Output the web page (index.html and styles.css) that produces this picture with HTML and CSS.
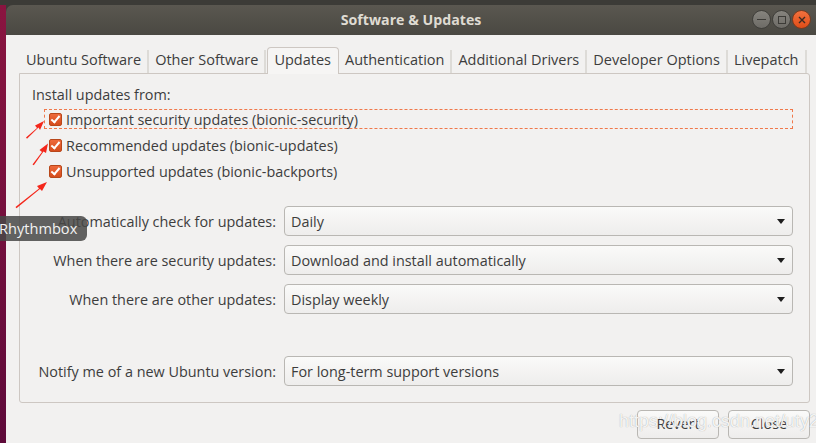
FILE: index.html
```html
<!DOCTYPE html>
<html lang="en">
    <head>
        <title>Software &amp; Updates</title>
        <link rel="stylesheet" href="styles.css">
    </head>
    <body>
        <div class="topbar"></div>
        <div class="desk">
            <div class="wallpaper"></div>
            <div class="window">
                <div class="titlebar">
                    <div class="title">Software &amp; Updates</div>
                    <div class="wm-buttons">
                        <div class="wm-btn wm-min"><span></span></div>
                        <div class="wm-btn wm-max"><span></span></div>
                        <div class="wm-btn wm-close">
                            <svg width="8" height="8" viewBox="0 0 8 8"><path d="M1 1L7 7M7 1L1 7" stroke="#3c2a22" stroke-width="1.4"/></svg>
                        </div>
                    </div>
                </div>
                <div class="content">
                    <div class="tabs">
                        <div class="tab">Ubuntu Software</div>
                        <div class="tab">Other Software</div>
                        <div class="tab active">Updates</div>
                        <div class="tab">Authentication</div>
                        <div class="tab">Additional Drivers</div>
                        <div class="tab">Developer Options</div>
                        <div class="tab">Livepatch</div>
                    </div>
                    <div class="panel">
                        <div class="heading">Install updates from:</div>
                        <div class="check-row focused"><span class="check"></span>Important security updates (bionic-security)</div>
                        <div class="check-row"><span class="check"></span>Recommended updates (bionic-updates)</div>
                        <div class="check-row"><span class="check"></span>Unsupported updates (bionic-backports)</div>

                        <div class="options">
                            <div class="label">Automatically check for updates:</div>
                            <div class="combo">Daily<span class="arrow"></span></div>
                            <div class="label">When there are security updates:</div>
                            <div class="combo">Download and install automatically<span class="arrow"></span></div>
                            <div class="label">When there are other updates:</div>
                            <div class="combo">Display weekly<span class="arrow"></span></div>
                            <div class="label spaced">Notify me of a new Ubuntu version:</div>
                            <div class="combo spaced">For long-term support versions<span class="arrow"></span></div>
                        </div>
                    </div>
                    <div class="actions">
                        <div class="button">Revert</div>
                        <div class="button">Close</div>
                    </div>
                </div>
            </div>
        </div>

        <!-- screenshot annotations and overlays -->
        <svg class="arrows" width="60" height="220" viewBox="0 0 60 220">
            <polygon points="26,137.5 37,128 35,125.5 44,121 40,130 38.5,127.5 27,138.8" fill="#f4271b"/>
            <polygon points="32.5,164.5 42,152 39.5,150 48,143.5 46,153 43.5,151.5 33.8,165.2" fill="#f4271b"/>
            <polygon points="15.5,207 39,188.5 37,186 47,182 42,191 40,189 16.5,208.2" fill="#f4271b"/>
        </svg>
        <div class="tooltip">Rhythmbox</div>
        <div class="watermark">https://blog.csdn.net/uty2</div>
    </body>
</html>
```

FILE: styles.css
```css
*{
    margin: 0px;
    padding: 0px;
    box-sizing: border-box;
}
body{
    width: 816px;
    height: 443px;
    overflow: hidden;
    background-color: #3c3b37;
    font-family: "Open Sans", "Noto Sans", sans-serif;
    font-size: 14px;
    color: #3d3d3d;
    position: relative;
}
.topbar{
    height: 5px;
    background-color: #3c3b37;
}
.desk{
    display: flex;
    height: 438px;
}
.wallpaper{
    width: 6px;
    background: linear-gradient(#8a1540, #5e0a3a);
}
.window{
    flex: 1;
    display: flex;
    flex-direction: column;
}
.titlebar{
    height: 30px;
    background: linear-gradient(#5a5750, #4a4842);
    border-radius: 7px 0 0 0;
    display: flex;
    align-items: center;
    justify-content: center;
    position: relative;
}
.title{
    color: #dfdbd2;
    font-weight: bold;
    font-size: 14.2px;
    padding-bottom: 1px;
}
.wm-buttons{
    position: absolute;
    right: 5px;
    top: 5px;
    display: flex;
}
.wm-btn{
    width: 19px;
    height: 19px;
    border-radius: 50%;
    background: linear-gradient(#86847e, #6d6b66);
    border: 1px solid #3f3e3a;
    display: flex;
    align-items: center;
    justify-content: center;
    margin-left: 1px;
}
.wm-min span{
    width: 9px;
    height: 1px;
    background-color: #3c3b37;
}
.wm-max span{
    width: 8px;
    height: 8px;
    border: 1px solid #3c3b37;
}
.wm-close{
    background: linear-gradient(#f2713e, #df4d18);
    border-color: #7a3a1e;
}
.content{
    flex: 1;
    background-color: #f2f1f0;
    padding: 12px 0px 0px 13px;
    display: flex;
    flex-direction: column;
}
.tabs{
    display: flex;
    margin-left: 1px;
    height: 26px;
    align-items: stretch;
}
.tab{
    padding: 2px 8px 0px 6px;
    line-height: 22px;
    color: #3d3d3d;
    font-size: 14.5px;
    position: relative;
}
.tab:after{
    content: "";
    position: absolute;
    right: 0px;
    top: 3px;
    bottom: 0px;
    width: 2px;
    background-color: #dddbd7;
}
.tab.active{
    background-color: #f6f5f4;
    border: 1px solid #cdc7c2;
    border-bottom: none;
    border-radius: 4px 4px 0 0;
    margin-left: 1px;
    padding: 1px 7px 0 6px;
    height: 27px;
    z-index: 2;
}
.tab.active:after{
    display: none;
}
.panel{
    height: 330px;
    margin-right: 6px;
    border: 1px solid #cdc7c2;
    border-radius: 0 3px 3px 3px;
    padding: 11px 16px 0px 12px;
}
.heading{
    line-height: 20px;
    font-size: 14.4px;
}
.check-row{
    display: flex;
    align-items: center;
    height: 20px;
    margin: 3px 0px 6px 12px;
    padding-left: 4px;
    border: 1px dashed transparent;
    font-size: 14.4px;
}
.check-row.focused{
    border-color: #f0784a;
    margin-top: 4px;
}
.check{
    width: 13px;
    height: 13px;
    border-radius: 2px;
    border: 1px solid #b8471a;
    background: linear-gradient(#ee6a3c, #d54c1c);
    margin-right: 4px;
    position: relative;
}
.check:after{
    content: "";
    position: absolute;
    left: 3px;
    top: 0px;
    width: 3px;
    height: 7px;
    border: solid white;
    border-width: 0 2px 2px 0;
    transform: rotate(40deg);
}
.options{
    display: grid;
    grid-template-columns: 244px 1fr;
    column-gap: 8px;
    row-gap: 9px;
    margin-top: 25px;
    align-items: center;
}
.label{
    text-align: right;
    font-size: 14.4px;
}
.label.spaced,
.combo.spaced{
    margin-top: 33px;
}
.combo{
    height: 30px;
    border: 1px solid #b9b7b3;
    border-radius: 4px;
    background: linear-gradient(#fafaf9, #eeedec);
    display: flex;
    align-items: center;
    padding: 0px 7px 0px 6px;
    font-size: 14.4px;
}
.arrow{
    margin-left: auto;
    width: 0px;
    height: 0px;
    border-left: 4px solid transparent;
    border-right: 4px solid transparent;
    border-top: 5px solid #1e1e1e;
}
.actions{
    display: flex;
    justify-content: flex-end;
    gap: 9px;
    margin-top: 7px;
    padding-right: 6px;
}
.button{
    width: 82px;
    height: 29px;
    border: 1px solid #b9b7b3;
    border-radius: 4px;
    background: linear-gradient(#fafaf9, #eeedec);
    text-align: center;
    line-height: 26px;
    font-size: 14.4px;
}
.arrows{
    position: absolute;
    left: 0px;
    top: 0px;
}
.tooltip{
    position: absolute;
    left: 0px;
    top: 216px;
    width: 87px;
    height: 25px;
    background-color: rgba(72, 72, 70, 0.85);
    border-radius: 0 6px 6px 0;
    color: #f2f2f2;
    font-size: 14.6px;
    line-height: 25px;
    text-indent: -1px;
}
.watermark{
    position: absolute;
    left: 619px;
    top: 411px;
    color: rgba(255, 255, 255, 0.9);
    text-shadow: 0 0 1px #9a9a9a;
    font-family: "Liberation Sans", sans-serif;
    font-size: 18px;
}
```
